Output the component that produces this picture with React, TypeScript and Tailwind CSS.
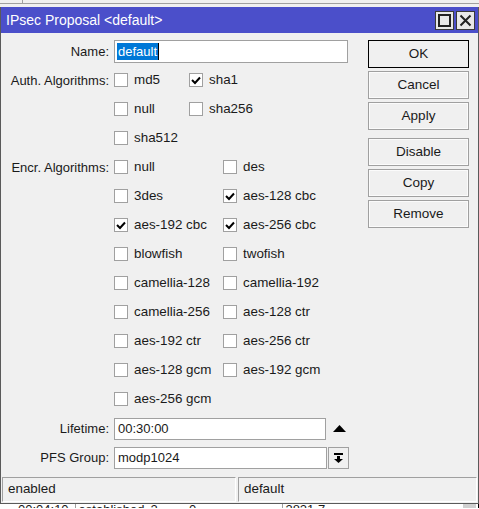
import React from 'react'

type Algo = { name: string; checked?: boolean }

const authRows: Algo[][] = [
  [{ name: 'md5' }, { name: 'sha1', checked: true }],
  [{ name: 'null' }, { name: 'sha256' }],
  [{ name: 'sha512' }],
]

const encrRows: Algo[][] = [
  [{ name: 'null' }, { name: 'des' }],
  [{ name: '3des' }, { name: 'aes-128 cbc', checked: true }],
  [{ name: 'aes-192 cbc', checked: true }, { name: 'aes-256 cbc', checked: true }],
  [{ name: 'blowfish' }, { name: 'twofish' }],
  [{ name: 'camellia-128' }, { name: 'camellia-192' }],
  [{ name: 'camellia-256' }, { name: 'aes-128 ctr' }],
  [{ name: 'aes-192 ctr' }, { name: 'aes-256 ctr' }],
  [{ name: 'aes-128 gcm' }, { name: 'aes-192 gcm' }],
  [{ name: 'aes-256 gcm' }],
]

function Check({ algo, width }: { algo: Algo; width: string }) {
  return (
    <div className={`flex items-center ${width}`}>
      <div className="w-[14px] h-[14px] bg-white border border-[#a0a0a0] flex items-center justify-center">
        {algo.checked && (
          <svg width="10" height="9" viewBox="0 0 10 9">
            <path d="M1 4 L4 7 L9 1.5" stroke="#000" strokeWidth="2" fill="none" />
          </svg>
        )}
      </div>
      <span className="ml-[6px] text-[13.4px] text-[#1a1a1a]">{algo.name}</span>
    </div>
  )
}

function Row({ label, children }: { label?: string; children: React.ReactNode }) {
  return (
    <div className="flex items-center h-[29px]">
      <div className="w-[110px] pr-[2px] text-right text-[13px] text-[#1a1a1a]">{label}</div>
      <div className="flex items-center flex-1">{children}</div>
    </div>
  )
}

function Btn({ label, primary }: { label: string; primary?: boolean }) {
  return (
    <div
      className={`h-[28px] w-[101px] flex items-center justify-center text-[13.5px] text-[#1a1a1a] bg-[#f0f0f0] ${
        primary ? 'border border-black' : 'border border-[#a0a0a0] shadow-[inset_0_0_0_1px_#fbfbfb]'
      }`}
    >
      {label}
    </div>
  )
}

export default function App() {
  return (
    <div className="w-[479px] h-[509px] bg-white overflow-hidden" style={{ fontFamily: '"Liberation Sans", Arial, sans-serif' }}>
      {/* window behind */}
      <div className="h-[7px] bg-[#f0f0f0] flex">
        <div className="w-[23px] h-[4px] border-b border-r border-[#a0a0a0]" />
        <div className="flex-1 h-[4px] border-b border-[#a0a0a0]" />
      </div>

      <div className="w-[479px] border border-[#5a5a5a] border-t-0 bg-[#f0f0f0]">
        {/* title bar */}
        <div className="h-[26px] bg-[#4b4fca] flex items-center pl-[5px] pr-[3px]">
          <span className="text-white text-[14px] flex-1">IPsec Proposal &lt;default&gt;</span>
          <div className="flex gap-[2px]">
            <div className="w-[19px] h-[19px] bg-[#e8e8e8] border border-[#3a3a3a] flex items-center justify-center">
              <div className="w-[13px] h-[13px] border-2 border-[#222]" />
            </div>
            <div className="w-[19px] h-[19px] bg-[#e8e8e8] border border-[#3a3a3a] flex items-center justify-center">
              <svg width="13" height="13" viewBox="0 0 13 13">
                <path d="M1.5 1.5 L11.5 11.5 M11.5 1.5 L1.5 11.5" stroke="#222" strokeWidth="2" />
              </svg>
            </div>
          </div>
        </div>

        {/* content */}
        <div className="flex pt-[4px]">
          <div className="flex-1">
            <Row label="Name:">
              <div className="ml-[3px] w-[234px] h-[23px] bg-white border border-[#a0a0a0] flex items-center px-[2px]">
                <span className="bg-[#0078d7] text-white text-[13px] leading-[17px] px-[1px]">default</span>
                <span className="w-px h-[17px] bg-black" />
              </div>
            </Row>
            {authRows.map((r, i) => (
              <Row key={'a' + i} label={i === 0 ? 'Auth. Algorithms:' : undefined}>
                <div className="ml-[3px] flex">
                  {r.map((a) => (
                    <Check key={a.name} algo={a} width="w-[75px]" />
                  ))}
                </div>
              </Row>
            ))}
            {encrRows.map((r, i) => (
              <Row key={'e' + i} label={i === 0 ? 'Encr. Algorithms:' : undefined}>
                <div className="ml-[3px] flex">
                  {r.map((a) => (
                    <Check key={a.name} algo={a} width="w-[109px]" />
                  ))}
                </div>
              </Row>
            ))}
            <Row label="Lifetime:">
              <div className="ml-[3px] w-[212px] h-[22px] bg-white border border-[#a0a0a0] flex items-center px-[3px] text-[13px] text-[#1a1a1a]">
                00:30:00
              </div>
              <svg className="ml-[7px]" width="13" height="7" viewBox="0 0 13 7">
                <path d="M0 7 L6.5 0 L13 7 Z" fill="#000" />
              </svg>
            </Row>
            <Row label="PFS Group:">
              <div className="ml-[3px] w-[213px] h-[22px] bg-white border border-[#a0a0a0] flex items-center px-[3px] text-[13px] text-[#1a1a1a]">
                modp1024
              </div>
              <div className="ml-[1px] w-[21px] h-[22px] border border-[#a0a0a0] bg-[#f0f0f0] flex items-center justify-center">
                <svg width="11" height="11" viewBox="0 0 11 11">
                  <rect x="1" y="1" width="9" height="2" fill="#000" />
                  <rect x="4" y="4" width="3" height="3" fill="#000" />
                  <path d="M1 7 L10 7 L5.5 11 Z" fill="#000" />
                </svg>
              </div>
            </Row>
          </div>

          <div className="w-[101px] mr-[9px] mt-[3px] flex flex-col gap-[3px]">
            <Btn label="OK" primary />
            <Btn label="Cancel" />
            <Btn label="Apply" />
            <div className="h-[2px]" />
            <Btn label="Disable" />
            <Btn label="Copy" />
            <Btn label="Remove" />
          </div>
        </div>

        {/* status bar */}
        <div className="flex gap-[2px] px-[1px] pt-[5px] pb-[1px]">
          <div className="w-[234px] h-[25px] border-t border-l border-[#a0a0a0] border-b border-r border-b-white border-r-white flex items-center pl-[5px] text-[13.4px] text-[#1a1a1a]">
            enabled
          </div>
          <div className="flex-1 h-[25px] border-t border-l border-[#a0a0a0] border-b border-r border-b-white border-r-white flex items-center pl-[5px] text-[13.4px] text-[#1a1a1a]">
            default
          </div>
        </div>
      </div>

      {/* list behind, cut off */}
      <div className="h-[4px] overflow-hidden flex text-[13px] text-[#1a1a1a] leading-[14px]">
        <span className="ml-[18px] -mt-[1px]">00:04:10</span>
        <span className="ml-[6px] -mt-[1px] border-l border-[#a0a0a0] pl-[3px]">established</span>
        <span className="ml-[6px] -mt-[1px]">2 hours</span>
        <span className="ml-[6px] -mt-[1px]">0 b</span>
        <span className="ml-[80px] -mt-[1px] border-l border-[#a0a0a0] pl-[2px]">3821.7 KiB</span>
        <span className="ml-[130px] w-[18px] bg-[#d0d0d0]" />
        <span className="w-px bg-black ml-[2px]" />
      </div>
    </div>
  )
}
